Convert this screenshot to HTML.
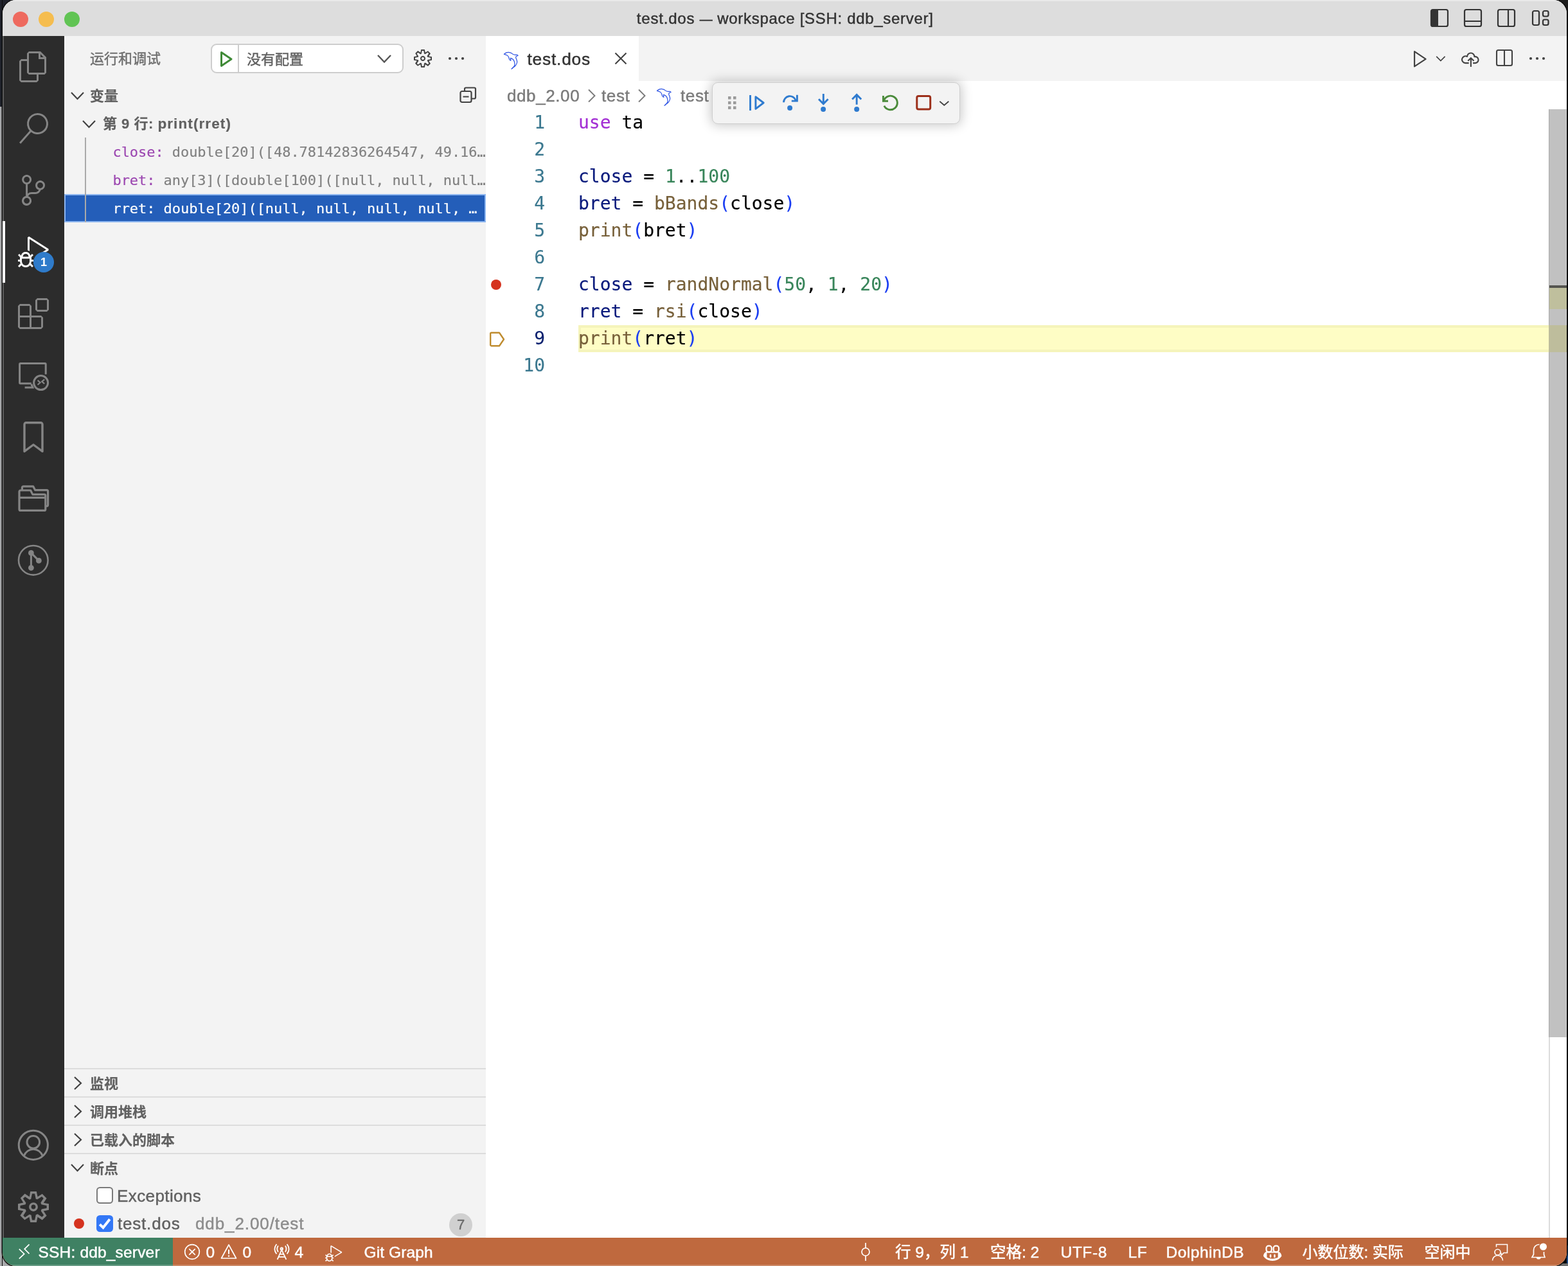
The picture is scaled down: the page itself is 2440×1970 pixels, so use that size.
<!DOCTYPE html>
<html lang="zh-CN">
<head>
<meta charset="utf-8">
<title>test.dos — workspace [SSH: ddb_server]</title>
<style>
*{box-sizing:border-box;margin:0;padding:0}
html,body{width:2440px;height:1970px;background:#000}
#root{position:absolute;left:0;top:0;width:2440px;height:1970px;overflow:hidden;background:#000}
body{position:relative;font-family:"Liberation Sans","Noto Sans CJK SC",sans-serif;font-size:26px;color:#616161;-webkit-text-stroke:0.45px}
.mono{-webkit-text-stroke:0.15px}
.abs{position:absolute}
.mono{font-family:"DejaVu Sans Mono","Liberation Mono","Noto Sans CJK SC",monospace}
svg{display:block;overflow:visible}
/* desktop strips */
#deskL1{left:0;top:0;width:30px;height:166px;background:#1f222b}
#deskL2{left:0;top:166px;width:30px;height:1804px;background:#a8a9ab}
#deskL3{left:3px;top:0;width:1px;height:1970px;background:#0a0a0a}
#deskR{left:2410px;top:0;width:30px;height:1970px;background:#060606}
#deskRT{left:2410px;top:0;width:30px;height:30px;background:#1c1c1c}
#deskRG{left:2410px;top:1966px;width:30px;height:4px;background:#6e6e6e}
#deskRB{left:2420px;top:1938px;width:20px;height:28px;background:#1d4a86;border-left:18px solid #060606}
/* window */
#win{will-change:transform;left:4px;top:0;width:2434px;height:1970px;border-radius:21px;overflow:hidden;background:#fff;box-shadow:0 0 0 1.5px #0d0d0d}
#title{left:0;top:0;width:2434px;height:56px;background:#dddddd;border-top:2px solid #e9e9e9}
#title .t{left:0;width:2434px;top:11px;text-align:center;font-size:24px;line-height:32px;color:#333;white-space:pre;letter-spacing:0.8px;word-spacing:0px}
.tl{width:24px;height:24px;border-radius:50%;top:16px}
/* activity */
#act{left:0;top:56px;width:96px;height:1870px;background:#2c2c2c}
#act .ic{left:24px;width:48px;height:48px}
/* sidebar */
#side{left:96px;top:56px;width:656px;height:1870px;background:#f3f3f3;overflow:hidden}
.row{left:0;width:656px;height:44px;line-height:44px;white-space:pre}
.hdr{font-weight:bold;color:#616161;font-size:22px;-webkit-text-stroke:0.2px}
.sep{left:0;width:656px;height:2px;background:#dcdcdc}
/* editor */
#ed{left:752px;top:56px;width:1682px;height:1870px;background:#fff}
#tabs{left:0;top:0;width:1682px;height:70px;background:#f3f3f3}
#tab{left:0;top:0;width:238px;height:70px;background:#fff}
#code{left:0;top:114px;width:1682px}
.ln{left:0;width:1682px;height:42px;line-height:42px;font-size:28px;white-space:pre}
.ln .n{position:absolute;left:0;width:92px;text-align:right;color:#3b788f}
.ln .c{position:absolute;left:144px;color:#000}
.kw{color:#a32fd4}.v{color:#0a1a7c}.num{color:#38855a}.fn{color:#77603a}.p{color:#1a3df2}
/* status */
#status{left:0;top:1926px;width:2434px;height:44px;background:#bf693e;color:#fff;font-size:24.500px;line-height:44px;white-space:pre}
#status .s{position:absolute;top:1px;height:44px;-webkit-text-stroke:0.45px #fff}

.chev{position:absolute;fill:none;stroke:#424242;stroke-width:2.2}
.var{font-size:22px;color:#808080;letter-spacing:-0.06px}
.var .nm{color:#9b46b0}
.cb{position:absolute;width:26px;height:26px;border-radius:5.500px}
</style>
</head>
<body>
<div id="root">
<div class="abs" id="deskL1"></div><div class="abs" id="deskL2"></div><div class="abs" id="deskL3"></div>
<div class="abs" id="deskR"></div><div class="abs" id="deskRT"></div><div class="abs" id="deskRB"></div><div class="abs" id="deskRG"></div>
<div class="abs" id="win">
<div class="abs" id="title">
<div class="abs tl" style="left:16px;background:#ee6a5f"></div>
<div class="abs tl" style="left:56px;background:#f5bd4f"></div>
<div class="abs tl" style="left:96px;background:#61c454"></div>
<div class="abs t" style="padding-left:1.500px"><span id="t1">test.dos</span> <span id="t2" style="font-size:20px;letter-spacing:0">—</span> <span id="t3" style="letter-spacing:0.7px">workspace [SSH: ddb_server]</span></div>
<svg class="abs" style="left:2220px;top:10px" width="32" height="32" viewBox="0 0 32 32" fill="none" stroke="#333" stroke-width="2.2"><rect x="3" y="3" width="26" height="26" rx="2.8"/><path d="M4 4h10v24H4z" fill="#333" stroke="none"/></svg>
<svg class="abs" style="left:2272px;top:10px" width="32" height="32" viewBox="0 0 32 32" fill="none" stroke="#333" stroke-width="2.2"><rect x="3" y="3" width="26" height="26" rx="2.8"/><path d="M3 21h26"/></svg>
<svg class="abs" style="left:2324px;top:10px" width="32" height="32" viewBox="0 0 32 32" fill="none" stroke="#333" stroke-width="2.2"><rect x="3" y="3" width="26" height="26" rx="2.8"/><path d="M19 3v26"/></svg>
<svg class="abs" style="left:2377px;top:10px" width="32" height="32" viewBox="0 0 32 32" fill="none" stroke="#333" stroke-width="2.2"><rect x="4" y="5" width="10" height="22" rx="2.5"/><rect x="20" y="5" width="8.5" height="8.5" rx="2.5"/><rect x="20" y="18.500" width="8.5" height="8.5" rx="2.5"/></svg>
</div>
<div class="abs" id="act">
<div class="abs" style="left:0;top:0;width:2px;height:1870px;background:#5b5b5b"></div>
<div class="abs" style="left:0;top:288px;width:4px;height:96px;background:#fff"></div>
<svg class="abs ic" style="top:24px" width="48" height="48" viewBox="0 0 24 24" ><path fill="#858585" d="M17.5 0h-9L7 1.5V6H2.5L1 7.5v15.07L2.5 24h12.07L16 22.57V18h4.7l1.3-1.43V4.5L17.5 0zm0 2.12l2.38 2.38H17.5V2.12zm-3 20.38h-12v-15H7v9.07L8.5 18h6v4.5zm6-6h-12v-15H16V6h4.5v10.5z"/></svg>
<svg class="abs ic" style="top:120px" width="48" height="48" viewBox="0 0 24 24" ><path fill="#858585" d="M15.25 0a8.25 8.25 0 0 0-6.18 13.72L1 22.88l1.12 1 8.05-9.12A8.251 8.251 0 1 0 15.25.01V0zm0 15a6.75 6.75 0 1 1 0-13.5 6.75 6.75 0 0 1 0 13.5z"/></svg>
<svg class="abs ic" style="top:216px" width="48" height="48" viewBox="0 0 24 24" ><path fill="#858585" d="M21.007 8.222A3.738 3.738 0 0 0 15.045 5.2a3.737 3.737 0 0 0 1.156 6.583 2.988 2.988 0 0 1-2.668 1.67h-2.99a4.456 4.456 0 0 0-2.989 1.165V7.4a3.737 3.737 0 1 0-1.494 0v9.117a3.776 3.776 0 1 0 1.816.099 2.99 2.99 0 0 1 2.668-1.667h2.99a4.484 4.484 0 0 0 4.223-3.039 3.736 3.736 0 0 0 3.25-3.687zM4.565 3.738a2.242 2.242 0 1 1 4.484 0 2.242 2.242 0 0 1-4.484 0zm4.484 16.441a2.242 2.242 0 1 1-4.484 0 2.242 2.242 0 0 1 4.484 0zm8.221-9.715a2.242 2.242 0 1 1 0-4.485 2.242 2.242 0 0 1 0 4.485z"/></svg>
<svg class="abs ic" style="top:312px" width="48" height="48" viewBox="0 0 24 24" ><path fill="#fff" d="M10.94 13.5l-1.32 1.32a3.73 3.73 0 0 0-7.24 0L1.06 13.5 0 14.56l1.72 1.72-.22.22V18H0v1.5h1.5v.08c.077.489.214.966.41 1.42L0 22.94 1.06 24l1.65-1.65A4.308 4.308 0 0 0 6 24a4.31 4.31 0 0 0 3.29-1.65L10.94 24 12 22.94 10.09 21c.198-.464.336-.951.41-1.45v-.1H12V18h-1.5v-1.5l-.22-.22L12 14.56l-1.06-1.06zM6 13.5a2.25 2.25 0 0 1 2.25 2.25h-4.5A2.25 2.25 0 0 1 6 13.5zm3 6a3.33 3.33 0 0 1-3 3 3.33 3.33 0 0 1-3-3v-2.25h6v2.25zm14.76-9.9v1.26L13.5 17.37V15.6l8.5-5.37L9 2v9.46a5.07 5.07 0 0 0-1.5-.72V.63L8.640 0l15.12 9.6z"/></svg>
<div class="abs" style="left:48px;top:336px;width:32px;height:32px;border-radius:16px;background:#2f7bca;color:#fff;font-weight:bold;font-size:18px;line-height:32px;text-align:center;-webkit-text-stroke:0">1</div>
<svg class="abs ic" style="top:408px" width="48" height="48" viewBox="0 0 24 24" ><path fill="#858585" d="M13.5 1.5L15 0h7.5L24 1.5V9l-1.5 1.5H15L13.5 9V1.500zm1.5 0V9h7.5V1.500H15zM0 15V6l1.500-1.500H9L10.500 6v7.500H18l1.500 1.500v7.500L18 24H1.500L0 22.500V15zm9-1.500V6H1.500v7.500H9zM9 15H1.500v7.500H9V15zm1.500 7.500H18V15h-7.500v7.500z"/></svg>
<svg class="abs ic" style="top:504px" width="48" height="48" viewBox="0 0 24 24" ><g fill="none" stroke="#858585" stroke-width="1.5"><path d="M21.6 11.2V3.4a.6.6 0 0 0-.6-.6H1.9a.6.6 0 0 0-.6.6v14.400a.6.6 0 0 0 .6.6H10.400"/><path d="M5.300 21.500h6.200l-1.100-2.600"/><circle cx="17.800" cy="17.800" r="5.500"/><path d="M15.300 15.900l2 1.700-2 1.800M20.600 15.200l-2 1.700 2 1.700" stroke-width="1.100"/></g></svg>
<svg class="abs ic" style="top:600px" width="48" height="48" viewBox="0 0 24 24" ><path fill="none" stroke="#858585" stroke-width="1.700" stroke-linejoin="round" d="M6.300 .9h11.400a1.300 1.300 0 0 1 1.300 1.300V23.200l-7-5.200-7 5.200V2.200A1.300 1.300 0 0 1 6.300 .9z"/></svg>
<svg class="abs ic" style="top:696px" width="48" height="48" viewBox="0 0 24 24" ><g fill="none" stroke="#858585" stroke-width="1.600" stroke-linejoin="round"><path d="M3.200 5V3.400a1 1 0 0 1 1-1h7.600l1.500 2.900h9a1 1 0 0 1 1 1v10.500a1 1 0 0 1-1 1h-.9"/><path d="M1 6.500a1 1 0 0 1 1-1h7.800l1.600 3.200h9a1 1 0 0 1 1 1v10.500a1 1 0 0 1-1 1H2a1 1 0 0 1-1-1z"/><path d="M1 11.200h20.400"/></g></svg>
<svg class="abs ic" style="top:792px" width="48" height="48" viewBox="0 0 24 24" ><g fill="#858585" stroke="#858585"><circle cx="11.900" cy="11.900" r="11.400" fill="none" stroke-width="1.300"/><circle cx="10.200" cy="6.200" r="2.200" stroke="none"/><circle cx="10.200" cy="17.800" r="2.200" stroke="none"/><circle cx="16.200" cy="12.200" r="2.200" stroke="none"/><path d="M10.200 6.200V17.800M10.200 6.200L16.200 12.200" stroke-width="1.500"/></g></svg>
<svg class="abs ic" style="top:1702px" width="48" height="48" viewBox="0 0 24 24" ><g fill="none" stroke="#858585" stroke-width="1.500"><circle cx="11.900" cy="11.900" r="11.300"/><circle cx="11.900" cy="9.600" r="4.900"/><path d="M4.700 20.300a7.600 7.600 0 0 1 14.400 0"/></g></svg>
<svg class="abs ic" style="top:1798px" width="48" height="48" viewBox="0 0 24 24" ><g transform="translate(-1.700 -1.700) scale(1.714)"><path fill="#858585" fill-rule="evenodd" d="M9.100 4.400L8.600 2H7.400l-.5 2.400-.7.300-2-1.300-.9.800 1.300 2-.2.700-2.400.5v1.200l2.400.5.300.8-1.300 2 .8.800 2-1.300.8.300.4 2.300h1.200l.5-2.400.8-.3 2 1.300.8-.8-1.300-2 .3-.8 2.300-.4V7.400l-2.400-.5-.3-.8 1.300-2-.8-.8-2 1.300-.7-.2zM9.400 1l.5 2.400L12 2.100l2 2-1.400 2.100 2.400.4v2.800l-2.400.5L14 12l-2 2-2.100-1.400-.5 2.400H6.600l-.5-2.400L4 13.900l-2-2 1.400-2.100L1 9.400V6.600l2.400-.5L2.100 4l2-2 2.100 1.400.4-2.400h2.800zm.6 7c0 1.100-.9 2-2 2s-2-.9-2-2 .9-2 2-2 2 .9 2 2zM8 9c.6 0 1-.4 1-1s-.4-1-1-1-1 .4-1 1 .4 1 1 1z"/></g></svg>
</div>
<div class="abs" id="side">
<div class="abs" style="left:40px;top:15px;font-size:22px;line-height:42px;color:#6f6f6f;white-space:pre">运行和调试</div>
<div class="abs" style="left:228px;top:12px;width:300px;height:46px;border:2px solid #cdcdcd;border-radius:9px;background:#fff"></div>
<div class="abs" style="left:270px;top:14px;width:2px;height:42px;background:#cdcdcd"></div>
<svg class="abs" style="left:240px;top:22px" width="26" height="28" viewBox="0 0 26 28" fill="none" stroke="#3f8a37" stroke-width="3" stroke-linejoin="round"><path d="M4.500 3.500L20 14 4.500 24.500z"/></svg>
<div class="abs" style="left:284px;top:16px;font-size:22px;line-height:42px;color:#616161;white-space:pre">没有配置</div>
<svg class="abs" style="left:486.0px;top:28.25px" width="24" height="14.5" viewBox="-2 -2 24 14.5" fill="none" stroke="#555" stroke-width="2.4"><path d="M0 0L10.0 10.5L20 0"/></svg>
<svg class="abs" style="left:542px;top:19px" width="32" height="32" viewBox="0 0 16 16"><path fill="#424242" fill-rule="evenodd" d="M9.100 4.400L8.600 2H7.400l-.5 2.400-.7.300-2-1.300-.9.800 1.300 2-.2.700-2.400.5v1.200l2.400.5.300.8-1.300 2 .8.800 2-1.300.8.300.4 2.300h1.200l.5-2.400.8-.3 2 1.300.8-.8-1.300-2 .3-.8 2.300-.4V7.400l-2.400-.5-.3-.8 1.300-2-.8-.8-2 1.300-.7-.2zM9.400 1l.5 2.400L12 2.100l2 2-1.400 2.100 2.400.4v2.800l-2.400.5L14 12l-2 2-2.100-1.400-.5 2.400H6.600l-.5-2.400L4 13.900l-2-2 1.400-2.100L1 9.400V6.600l2.400-.5L2.100 4l2-2 2.100 1.400.4-2.400h2.800zm.6 7c0 1.100-.9 2-2 2s-2-.9-2-2 .9-2 2-2 2 .9 2 2zM8 9c.6 0 1-.4 1-1s-.4-1-1-1-1 .4-1 1 .4 1 1 1z"/></svg>
<svg class="abs" style="left:594px;top:29px" width="32" height="12" viewBox="0 0 32 12" fill="#424242"><circle cx="6" cy="6" r="2.100"/><circle cx="16" cy="6" r="2.100"/><circle cx="26" cy="6" r="2.100"/></svg>
<svg class="abs" style="left:8.5px;top:86.0px" width="23" height="14" viewBox="-2 -2 23 14" fill="none" stroke="#424242" stroke-width="2.2"><path d="M0 0L9.5 10L19 0"/></svg>
<div class="abs hdr" style="left:40px;top:71.500px;line-height:44px;white-space:pre">变量</div>
<svg class="abs" style="left:614px;top:78px" width="28" height="28" viewBox="0 0 28 28" fill="none" stroke="#424242" stroke-width="2.200"><path d="M9 7V4.500a2 2 0 0 1 2-2h13a2 2 0 0 1 2 2v13a2 2 0 0 1-2 2H20"/><rect x="2.500" y="8" width="17" height="17" rx="2.500"/><path d="M6.500 16.500h9"/></svg>
<svg class="abs" style="left:26.5px;top:130.0px" width="23" height="14" viewBox="-2 -2 23 14" fill="none" stroke="#424242" stroke-width="2.2"><path d="M0 0L9.5 10L19 0"/></svg>
<div class="abs hdr" style="left:60px;top:115px;line-height:44px;white-space:pre;letter-spacing:0.5px">第 9 行: <span style="letter-spacing:1.1px;font-size:22.500px">print(rret)</span></div>
<div class="abs" style="left:0;top:246px;width:656px;height:44px;background:#245eb9;border:2px solid #8db6f0"></div>
<div class="abs" style="left:32px;top:158px;width:2px;height:132px;background:#a9a9a9"></div>
<div class="abs row mono var" style="top:159px;left:75.500px"><span class="nm">close:</span> double[20]([48.78142836264547, 49.16…</div>
<div class="abs row mono var" style="top:203px;left:75.500px"><span class="nm">bret:</span> any[3]([double[100]([null, null, null…</div>
<div class="abs row mono var" style="top:247px;left:75.500px;color:#fff">rret: double[20]([null, null, null, null, …</div>
<div class="abs sep" style="top:1606px"></div>
<svg class="abs" style="left:14.0px;top:1617.5px" width="14" height="23" viewBox="-2 -2 14 23" fill="none" stroke="#424242" stroke-width="2.2"><path d="M0 0L10 9.5L0 19"/></svg>
<div class="abs hdr" style="left:40px;top:1608.5px;line-height:44px;white-space:pre">监视</div>
<div class="abs sep" style="top:1650px"></div>
<svg class="abs" style="left:14.0px;top:1661.5px" width="14" height="23" viewBox="-2 -2 14 23" fill="none" stroke="#424242" stroke-width="2.2"><path d="M0 0L10 9.5L0 19"/></svg>
<div class="abs hdr" style="left:40px;top:1652.5px;line-height:44px;white-space:pre">调用堆栈</div>
<div class="abs sep" style="top:1694px"></div>
<svg class="abs" style="left:14.0px;top:1705.5px" width="14" height="23" viewBox="-2 -2 14 23" fill="none" stroke="#424242" stroke-width="2.2"><path d="M0 0L10 9.5L0 19"/></svg>
<div class="abs hdr" style="left:40px;top:1696.5px;line-height:44px;white-space:pre">已载入的脚本</div>
<div class="abs sep" style="top:1738px"></div>
<svg class="abs" style="left:8.5px;top:1754.0px" width="23" height="14" viewBox="-2 -2 23 14" fill="none" stroke="#424242" stroke-width="2.2"><path d="M0 0L9.5 10L19 0"/></svg>
<div class="abs hdr" style="left:40px;top:1740.5px;line-height:44px;white-space:pre">断点</div>
<div class="cb" style="left:50px;top:1791px;border:2px solid #7a7a7a;background:#fff"></div>
<div class="abs" style="left:82px;top:1783px;line-height:44px;font-size:26px;color:#616161;white-space:pre;letter-spacing:0.4px">Exceptions</div>
<div class="abs" style="left:15px;top:1840px;width:16px;height:16px;border-radius:8px;background:#d5331f"></div>
<div class="cb" style="left:50px;top:1835px;background:#3478f6"></div>
<svg class="abs" style="left:50px;top:1835px" width="26" height="26" viewBox="0 0 26 26" fill="none" stroke="#fff" stroke-width="4"><path d="M5.200 14.200L10.500 19.200 20.800 6.200"/></svg>
<div class="abs" style="left:83px;top:1826px;line-height:44px;font-size:26px;color:#616161;white-space:pre;letter-spacing:0.8px">test.dos</div>
<div class="abs" style="left:204px;top:1826px;line-height:44px;font-size:26px;color:#8c8c8c;white-space:pre;letter-spacing:0.9px">ddb_2.00/test</div>
<div class="abs" style="left:599px;top:1832px;width:36px;height:36px;border-radius:18px;background:#d0d0d0;color:#6a6a6a;font-size:22px;line-height:36px;text-align:center">7</div>
</div>
<div class="abs" id="ed">
<div class="abs" id="tabs"></div><div class="abs" id="tab"></div>
<svg class="abs" style="left:28px;top:24px" width="23" height="28" viewBox="0 0 23 28"><path fill="none" stroke="#3156e4" stroke-width="1.250" stroke-linejoin="round" stroke-linecap="round" d="M0.37 4.20C0.37 4.20 3.03 2.38 4.17 1.91C5.31 1.44 6.28 1.41 7.21 1.41C8.14 1.41 8.89 1.66 9.74 1.91C10.59 2.16 11.52 2.51 12.28 2.93C13.04 3.35 13.46 4.05 14.31 4.45C15.16 4.85 16.30 5.17 17.35 5.34C18.41 5.51 19.86 5.27 20.64 5.46C21.42 5.65 22.04 6.48 22.04 6.48C22.04 6.48 20.41 7.20 19.88 7.49C19.35 7.79 19.06 7.87 18.87 8.25C18.68 8.63 18.57 9.01 18.74 9.77C18.91 10.53 19.56 11.79 19.88 12.81C20.20 13.83 20.60 14.89 20.64 15.86C20.68 16.83 20.52 17.63 20.14 18.64C19.76 19.65 19.04 21.05 18.36 21.94C17.68 22.83 16.75 23.38 16.08 23.97C15.40 24.56 14.98 24.94 14.31 25.49C13.64 26.04 12.03 27.26 12.03 27.26C12.03 27.26 14.09 25.27 14.81 24.47C15.53 23.67 15.97 23.21 16.33 22.45C16.69 21.69 16.93 20.84 16.97 19.91C17.01 18.98 16.82 17.84 16.59 16.87C16.36 15.90 16.04 14.88 15.57 14.08C15.11 13.28 14.39 12.56 13.80 12.05C13.21 11.54 12.60 11.31 12.03 11.04C11.46 10.77 10.38 10.41 10.38 10.41C10.38 10.41 10.55 11.68 10.63 12.31C10.71 12.94 10.88 14.21 10.88 14.21C10.88 14.21 10.12 14.02 9.74 13.70C9.36 13.38 8.85 12.75 8.60 12.31C8.35 11.87 8.41 11.63 8.22 11.04C8.03 10.45 7.84 9.50 7.46 8.76C7.08 8.02 6.57 7.17 5.94 6.60C5.31 6.03 4.33 5.61 3.66 5.34C2.98 5.07 2.44 5.15 1.89 4.96C1.34 4.77 0.37 4.20 0.37 4.20z"/></svg>
<div class="abs" style="left:64.500px;top:15px;line-height:42px;font-size:26.300px;color:#333;white-space:pre;letter-spacing:0.8px">test.dos</div>
<svg class="abs" style="left:200px;top:25px" width="20" height="20" viewBox="0 0 20 20" fill="none" stroke="#424242" stroke-width="2.100"><path d="M1.500 1.500L18.500 18.500M18.500 1.500L1.500 18.500"/></svg>
<svg class="abs" style="left:1442px;top:22px" width="26" height="28" viewBox="0 0 26 28" fill="none" stroke="#424242" stroke-width="2.200" stroke-linejoin="round"><path d="M3.100 2.200L20.600 13.800 3.100 25.400z"/></svg>
<svg class="abs" style="left:1477px;top:30px" width="18" height="11" viewBox="0 0 18 11" fill="none" stroke="#424242" stroke-width="1.700"><path d="M2.200 1.800L8.900 8.500 15.600 1.800"/></svg>
<svg class="abs" style="left:1516px;top:22.800px" width="32" height="28" viewBox="0 0 32 28" fill="none" stroke="#424242" stroke-width="2.100" stroke-linejoin="round"><path d="M13.700 19.100H8.400A5.400 5.400 0 1 1 11.100 9A5.540 5.540 0 0 1 22.400 9.240A5 5 0 1 1 23.900 19.100H20.100"/><path d="M16.900 25V11.500M12.300 15.800L16.900 11.200 21.500 15.800"/></svg>
<svg class="abs" style="left:1570px;top:19px" width="30" height="30" viewBox="0 0 30 30" fill="none" stroke="#424242" stroke-width="2.100"><rect x="3" y="3" width="24" height="24" rx="2.500"/><path d="M15 3v24"/></svg>
<svg class="abs" style="left:1620px;top:29px" width="32" height="12" viewBox="0 0 32 12" fill="#424242"><circle cx="6" cy="6" r="2.100"/><circle cx="16" cy="6" r="2.100"/><circle cx="26" cy="6" r="2.100"/></svg>
<div class="abs" style="left:33px;top:71px;font-size:26px;line-height:44px;color:#7b7b7b;white-space:pre;letter-spacing:0.6px">ddb_2.00</div>
<svg class="abs" style="left:158px;top:82px" width="14" height="22" viewBox="0 0 14 22" fill="none" stroke="#7b7b7b" stroke-width="1.900"><path d="M2 1.500L11.500 11 2 20.500"/></svg>
<div class="abs" style="left:180px;top:71px;font-size:26px;line-height:44px;color:#7b7b7b;white-space:pre;letter-spacing:0.6px">test</div>
<svg class="abs" style="left:236px;top:82px" width="14" height="22" viewBox="0 0 14 22" fill="none" stroke="#7b7b7b" stroke-width="1.900"><path d="M2 1.500L11.500 11 2 20.500"/></svg>
<svg class="abs" style="left:266px;top:81px" width="23" height="28" viewBox="0 0 23 28"><path fill="none" stroke="#3156e4" stroke-width="1.250" stroke-linejoin="round" stroke-linecap="round" d="M0.37 4.20C0.37 4.20 3.03 2.38 4.17 1.91C5.31 1.44 6.28 1.41 7.21 1.41C8.14 1.41 8.89 1.66 9.74 1.91C10.59 2.16 11.52 2.51 12.28 2.93C13.04 3.35 13.46 4.05 14.31 4.45C15.16 4.85 16.30 5.17 17.35 5.34C18.41 5.51 19.86 5.27 20.64 5.46C21.42 5.65 22.04 6.48 22.04 6.48C22.04 6.48 20.41 7.20 19.88 7.49C19.35 7.79 19.06 7.87 18.87 8.25C18.68 8.63 18.57 9.01 18.74 9.77C18.91 10.53 19.56 11.79 19.88 12.81C20.20 13.83 20.60 14.89 20.64 15.86C20.68 16.83 20.52 17.63 20.14 18.64C19.76 19.65 19.04 21.05 18.36 21.94C17.68 22.83 16.75 23.38 16.08 23.97C15.40 24.56 14.98 24.94 14.31 25.49C13.64 26.04 12.03 27.26 12.03 27.26C12.03 27.26 14.09 25.27 14.81 24.47C15.53 23.67 15.97 23.21 16.33 22.45C16.69 21.69 16.93 20.84 16.97 19.91C17.01 18.98 16.82 17.84 16.59 16.87C16.36 15.90 16.04 14.88 15.57 14.08C15.11 13.28 14.39 12.56 13.80 12.05C13.21 11.54 12.60 11.31 12.03 11.04C11.46 10.77 10.38 10.41 10.38 10.41C10.38 10.41 10.55 11.68 10.63 12.31C10.71 12.94 10.88 14.21 10.88 14.21C10.88 14.21 10.12 14.02 9.74 13.70C9.36 13.38 8.85 12.75 8.60 12.31C8.35 11.87 8.41 11.63 8.22 11.04C8.03 10.45 7.84 9.50 7.46 8.76C7.08 8.02 6.57 7.17 5.94 6.60C5.31 6.03 4.33 5.61 3.66 5.34C2.98 5.07 2.44 5.15 1.89 4.96C1.34 4.77 0.37 4.20 0.37 4.20z"/></svg>
<div class="abs" style="left:303px;top:71px;width:46px;overflow:hidden;font-size:26px;line-height:44px;color:#7b7b7b;white-space:pre;letter-spacing:0.6px">test.dos</div>
<div class="abs" style="left:144px;top:450px;width:1538px;height:42px;background:#fefdc5;border:4px solid #f5f4bb"></div>
<div class="abs mono" id="code">
<div class="abs ln" style="top:0px"><span class="n">1</span><span class="c"><span class="kw">use</span> ta</span></div>
<div class="abs ln" style="top:42px"><span class="n">2</span><span class="c"></span></div>
<div class="abs ln" style="top:84px"><span class="n">3</span><span class="c"><span class="v">close</span> = <span class="num">1</span>..<span class="num">100</span></span></div>
<div class="abs ln" style="top:126px"><span class="n">4</span><span class="c"><span class="v">bret</span> = <span class="fn">bBands</span><span class="p">(</span>close<span class="p">)</span></span></div>
<div class="abs ln" style="top:168px"><span class="n">5</span><span class="c"><span class="fn">print</span><span class="p">(</span>bret<span class="p">)</span></span></div>
<div class="abs ln" style="top:210px"><span class="n">6</span><span class="c"></span></div>
<div class="abs ln" style="top:252px"><span class="n">7</span><span class="c"><span class="v">close</span> = <span class="fn">randNormal</span><span class="p">(</span><span class="num">50</span>, <span class="num">1</span>, <span class="num">20</span><span class="p">)</span></span></div>
<div class="abs ln" style="top:294px"><span class="n">8</span><span class="c"><span class="v">rret</span> = <span class="fn">rsi</span><span class="p">(</span>close<span class="p">)</span></span></div>
<div class="abs ln" style="top:336px"><span class="n" style="color:#0b216f">9</span><span class="c"><span class="fn">print</span><span class="p">(</span>rret<span class="p">)</span></span></div>
<div class="abs ln" style="top:378px"><span class="n">10</span><span class="c"></span></div>
</div>
<div class="abs" style="left:8px;top:379px;width:16px;height:16px;border-radius:8px;background:#d5331f"></div>
<svg class="abs" style="left:4px;top:458px" width="28" height="28" viewBox="0 0 28 28" fill="none" stroke="#bf8c2f" stroke-width="2.400" stroke-linejoin="round"><path d="M4.700 3.800H17L24 14 17 24.200H4.700a1.500 1.500 0 0 1-1.500-1.500V5.300A1.500 1.500 0 0 1 4.700 3.800z"/></svg>
<div class="abs" style="left:1654px;top:114px;width:1.500px;height:1756px;background:#dcdcdc"></div>
<div class="abs" style="left:1654px;top:114px;width:28px;height:1444px;background:#c1c1c1;border-left:1px solid #a9a9a9;border-right:1px solid #d6d6d6"></div>
<div class="abs" style="left:1655px;top:388px;width:27px;height:4px;background:#555550"></div>
<div class="abs" style="left:1655px;top:392px;width:27px;height:33px;background:#bfbf9d"></div>
<div class="abs" style="left:1654px;top:450px;width:28px;height:42px;background:#bebd9c"></div>
<div class="abs" style="left:351.500px;top:71.500px;width:386.500px;height:65px;background:#f3f3f3;border:1.500px solid #cecece;border-radius:9px;box-shadow:0 0 18px 2px rgba(0,0,0,.22)"></div>
<svg class="abs" style="left:377px;top:94px" width="13" height="20" viewBox="0 0 13 20" fill="#9a9a9a"><rect x="0" y="0" width="4.500" height="4.500"/><rect x="8" y="0" width="4.500" height="4.500"/><rect x="0" y="7.700" width="4.500" height="4.500"/><rect x="8" y="7.700" width="4.500" height="4.500"/><rect x="0" y="15.400" width="4.500" height="4.500"/><rect x="8" y="15.400" width="4.500" height="4.500"/></svg>
<svg class="abs" style="left:406px;top:88px" width="32" height="32" viewBox="0 0 32 32" fill="none" stroke-width="2.600"><path stroke="#2f7bcf" stroke-width="2.900" d="M5.500 4.100V28"/><path stroke="#2f7bcf" stroke-width="2.900" stroke-linejoin="round" d="M13.900 6.700L26.200 16 13.900 25.400z"/></svg>
<svg class="abs" style="left:457px;top:88px" width="32" height="32" viewBox="0 0 32 32" fill="none" stroke-width="2.600"><path stroke="#2f7bcf" stroke-width="2.900" d="M6.500 15.300A9.600 9.600 0 0 1 25.200 12.200"/><path stroke="#2f7bcf" stroke-width="2.900" d="M27.400 3.700V13.100H18.800"/><circle cx="16.100" cy="24" r="4" fill="#2f7bcf"/></svg>
<svg class="abs" style="left:509px;top:88px" width="32" height="32" viewBox="0 0 32 32" fill="none" stroke-width="2.600"><path stroke="#2f7bcf" stroke-width="2.900" d="M16.300 2V17.300M9 10.300L16.300 17.600 23.600 10.300"/><circle cx="16.100" cy="25.900" r="4" fill="#2f7bcf"/></svg>
<svg class="abs" style="left:561px;top:88px" width="32" height="32" viewBox="0 0 32 32" fill="none" stroke-width="2.600"><path stroke="#2f7bcf" stroke-width="2.900" d="M16.150 18.700V3.600M9.100 10.500L16.150 3.400 23.200 10.500"/><circle cx="16.150" cy="25.900" r="4" fill="#2f7bcf"/></svg>
<svg class="abs" style="left:613px;top:88px" width="32" height="32" viewBox="0 0 32 32" fill="none" stroke-width="2.600"><path stroke="#4b8b3b" stroke-width="2.900" d="M6.300 12.600A10.800 10.800 0 1 1 6.850 20.700"/><path stroke="#4b8b3b" stroke-width="2.900" d="M5.400 5V13.200H13"/></svg>
<svg class="abs" style="left:665px;top:88px" width="32" height="32" viewBox="0 0 32 32" fill="none" stroke-width="2.600"><rect x="5.800" y="5.600" width="20.900" height="20.400" rx="2.500" stroke="#9c2f1a" stroke-width="3"/></svg>
<svg class="abs" style="left:704px;top:99px" width="19" height="12" viewBox="0 0 19 12" fill="none" stroke="#424242" stroke-width="1.800"><path d="M2.300 2.800L9.300 8.700 16.300 2.800"/></svg>
</div>
<div class="abs" id="status">
<div class="abs" style="left:0;top:0;width:265px;height:44px;background:#3f8163"></div>
<svg class="abs" style="left:24px;top:9px" width="20" height="26" viewBox="0 0 20 26" fill="none" stroke="#fff" stroke-width="1.700"><path d="M1.800 8.600L9.700 16.200 1.800 23.700"/><path d="M17.500 1.400L10.200 8.600 17.500 15.800"/></svg>
<div class="s" style="left:55.5px;letter-spacing:0.18px;">SSH: ddb_server</div>
<svg class="abs" style="left:282px;top:9px" width="26" height="26" viewBox="0 0 26 26" fill="none" stroke="#fff" stroke-width="1.700"><circle cx="13" cy="13" r="11.300"/><path d="M8.300 8.300L17.700 17.700M17.700 8.300L8.300 17.700"/></svg>
<div class="s" style="left:316.5px;letter-spacing:0.25px;">0</div>
<svg class="abs" style="left:339px;top:9px" width="26" height="25" viewBox="0 0 26 25" fill="none" stroke="#fff" stroke-width="1.700" stroke-linejoin="round"><path d="M13 2L24.500 23H1.500z"/><path d="M13 9.500V16.500" stroke-width="2"/><circle cx="13" cy="19.500" r="1.200" fill="#fff" stroke="none"/></svg>
<div class="s" style="left:373.5px;letter-spacing:0.25px;">0</div>
<svg class="abs" style="left:422px;top:9px" width="25" height="26" viewBox="0 0 25 26" fill="none" stroke="#fff" stroke-width="1.800"><path d="M5.600 24.800L12.300 9.800 19.400 24.800M7.500 20.800h9.700M9.200 16.700h6.500"/><circle cx="12.300" cy="8.200" r="1.700"/><path d="M6.900 3.600Q3.500 8.400 6.900 13.300M17.900 3.600Q21.300 8.400 17.900 13.300M4.400 1Q-1.500 8.600 4.400 16.300M20.600 1Q26.500 8.600 20.600 16.300"/></svg>
<div class="s" style="left:454.5px;letter-spacing:0.25px;">4</div>
<svg class="abs" style="left:501.700px;top:12.200px" width="27" height="26" viewBox="0 0 27 26"><g transform="scale(1.1 1.04)"><path fill="#fff" d="M10.940 13.500l-1.320 1.320a3.730 3.730 0 0 0-7.240 0L1.060 13.500 0 14.560l1.720 1.720-.22.220V18H0v1.500h1.500v.080c.077.489.214.966.410 1.420L0 22.940 1.060 24l1.650-1.650A4.308 4.308 0 0 0 6 24a4.310 4.310 0 0 0 3.290-1.650L10.940 24 12 22.940 10.090 21c.198-.464.336-.951.410-1.450v-.1H12V18h-1.500v-1.500l-.22-.22L12 14.560l-1.060-1.060zM6 13.500a2.250 2.250 0 0 1 2.250 2.250h-4.500A2.250 2.250 0 0 1 6 13.500zm3 6a3.330 3.330 0 0 1-3 3 3.330 3.330 0 0 1-3-3v-2.250h6v2.250zm14.760-9.900v1.260L13.500 17.370V15.600l8.500-5.370L9 2v9.460a5.070 5.070 0 0 0-1.500-.72V.630L8.640 0l15.120 9.600z"/></g></svg>
<div class="s" style="left:562.5px;letter-spacing:0.12px;">Git Graph</div>
<svg class="abs" style="left:1333px;top:7px" width="20" height="30" viewBox="0 0 20 30" fill="none" stroke="#fff" stroke-width="1.700"><circle cx="10" cy="15" r="6"/><path d="M10 1V9M10 21V29"/></svg>
<div class="s" style="left:1389px;letter-spacing:0px;">行 9，列 1</div>
<div class="s" style="left:1537px;letter-spacing:0px;">空格: 2</div>
<div class="s" style="left:1646.5px;letter-spacing:0.6px;">UTF-8</div>
<div class="s" style="left:1751.5px;letter-spacing:0.6px;">LF</div>
<div class="s" style="left:1810.5px;letter-spacing:0.5px;">DolphinDB</div>
<svg class="abs" style="left:1961px;top:9px" width="31" height="28" viewBox="0 0 31 28"><path fill="#fff" d="M1 19.500C1 16 3 14 5.500 12.500H24.800C27.300 14 29.300 16 29.300 19.500 27 24 21 26.900 15.150 26.900S3.300 24 1 19.500z"/><path fill="#bf693e" d="M6.400 14.400H23.700V21.600C21 23.100 18 23.700 15.050 23.700S9 23.100 6.400 21.600z"/><rect x="5.500" y="3.700" width="8.300" height="9.400" rx="3.400" fill="#bf693e" stroke="#fff" stroke-width="2.200"/><rect x="16.700" y="3.700" width="8.300" height="9.400" rx="3.400" fill="#bf693e" stroke="#fff" stroke-width="2.200"/><rect x="10.800" y="16.700" width="2.500" height="5.200" rx="1.200" fill="#fff"/><rect x="17.200" y="16.700" width="2.500" height="5.200" rx="1.200" fill="#fff"/></svg>
<div class="s" style="left:2022.5px;letter-spacing:0px;font-size:24px">小数位数: 实际</div>
<div class="s" style="left:2212.5px;letter-spacing:0px;font-size:24px">空闲中</div>
<svg class="abs" style="left:2317px;top:9px" width="26" height="27" viewBox="0 0 26 27" fill="none" stroke="#fff" stroke-width="1.600"><path d="M7.500 5.500V1.500H24.500V14.500H19L15 18.500V14.500"/><circle cx="9.500" cy="13.500" r="4.500"/><path d="M1.500 26.500A8 8 0 0 1 17.500 26.500"/></svg>
<svg class="abs" style="left:2378px;top:8px" width="26" height="28" viewBox="0 0 26 28" fill="none" stroke="#fff" stroke-width="1.700"><path d="M13.500 2.500A8.500 8.500 0 0 0 4.500 11V18L2 22.500H22L20.500 18V14"/><path d="M9.500 22.500a2.800 2.800 0 0 0 5.500 0" fill="#fff"/><circle cx="19.500" cy="6" r="5.500" fill="#fff" stroke="none"/></svg>
<div class="abs" style="left:0;top:42px;width:2434px;height:2px;background:rgba(255,255,255,.22)"></div>
</div>
</div>
</div>
</body>
</html>
